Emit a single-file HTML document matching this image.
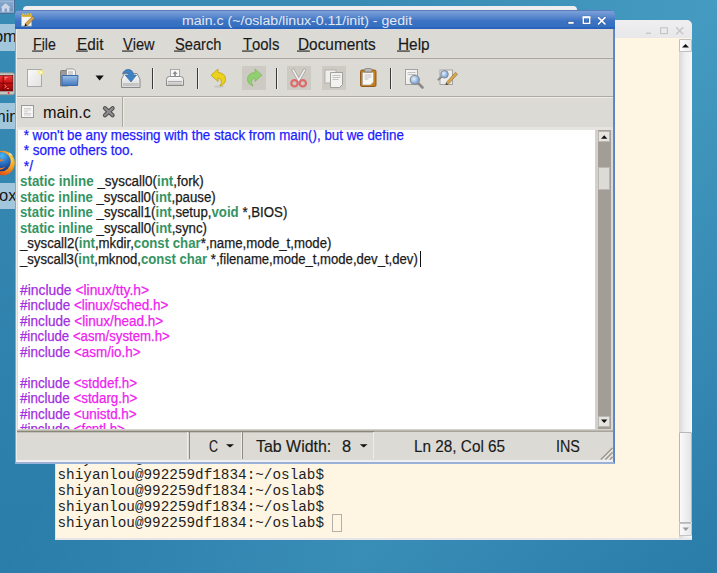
<!DOCTYPE html>
<html><head><meta charset="utf-8">
<style>
*{margin:0;padding:0;box-sizing:border-box}
html,body{width:717px;height:573px;overflow:hidden}
body{position:relative;font-family:"Liberation Sans",sans-serif;background:linear-gradient(122.6deg,rgba(130,230,255,0) 33%,rgba(130,230,255,0.16) 66%,rgba(130,230,255,0) 99%),linear-gradient(180deg,rgb(57,140,181),rgb(42,124,169))}
.a{position:absolute}
svg{position:absolute;display:block}
.dlabel{position:absolute;left:0;width:15px;background:#a2c6dc}
.dtxt{position:absolute;font-size:16.5px;line-height:19px;color:#161616;white-space:nowrap}
#bw{left:23px;top:6px;width:554px;height:40px;background:#eeeef0;border-radius:4px 4px 0 0}
#term{left:55px;top:38px;width:637px;height:502px;background:#fff5e3;border:1px solid #e4e4e8;border-top:none;border-bottom:2px solid #e6e6ea}
#termtb{left:55px;top:20px;width:637px;height:19px;background:linear-gradient(#efeff1,#e7e7ea);border-radius:5px 5px 0 0}
#termsb{left:679px;top:39px;width:13px;height:499px;background:linear-gradient(90deg,#d8d8dc,#eeeef0 45%,#f8f8fa)}
.tline{position:absolute;left:57.5px;font-family:"Liberation Mono",monospace;font-size:14.33px;line-height:16px;color:#1e1e1e;white-space:pre}
#ged{left:15px;top:28px;width:600px;height:436px;background:#dcdad5;border-left:1px solid #8aa2cc;border-right:1px solid #5a82c4;border-bottom:2px solid #9ab2d6}
#gtitle{left:15px;top:10px;width:600px;height:19px;background:linear-gradient(#5a7cbc 0px,#5a7cbc 1px,#7ba1d8 1px,#5f8ccf 6px,#3d72c3 11px,#3470c0 17px,#2a62bc 17px);border-radius:5px 5px 0 0}
.sx{position:absolute;white-space:pre;transform-origin:0 0}
.menu{position:absolute;top:36px;font-size:15.6px;color:#1a1a1a;white-space:pre;transform-origin:0 0;-webkit-text-stroke:0.15px currentColor}
.menu u{text-decoration:none;position:relative}
.menu u:after{content:"";position:absolute;left:-1px;right:-1px;bottom:1px;height:2px;background:linear-gradient(#8a8884,#5a5a5a)}
.sep{position:absolute;top:68px;width:2px;height:21px;background:#3a3a3a;border-right:1px solid #f2f1ee}
.ibox{position:absolute;top:66px;width:24px;height:24px;background:#cdcac4}
#code{left:18px;top:130px;width:577px;height:299px;background:#fff;overflow:hidden}
.cl{position:absolute;left:2px;font-size:13.8px;line-height:15.52px;white-space:pre;color:#1a1a1a;transform-origin:0 0;-webkit-text-stroke:0.25px currentColor}
.k{color:#359462;font-weight:bold;-webkit-text-stroke:0}
.cm{color:#1c1cff}
.pp{color:#a22ee0}
.st{color:#f020f0}
.stat{position:absolute;top:437.5px;font-size:15.6px;color:#1a1a1a;white-space:pre;transform-origin:0 0;-webkit-text-stroke:0.15px currentColor}
</style></head><body>
<!-- desktop icons -->
<svg width="16" height="215" style="left:0;top:0">
 <defs>
  <linearGradient id="hb" x1="0" y1="0" x2="0" y2="1"><stop offset="0" stop-color="#8fb0d4"/><stop offset="1" stop-color="#6e92bc"/></linearGradient>
  <linearGradient id="tr" x1="0" y1="0" x2="0" y2="1"><stop offset="0" stop-color="#f03838"/><stop offset="0.5" stop-color="#c81010"/><stop offset="1" stop-color="#8c0606"/></linearGradient>
  <radialGradient id="ffo" cx="0.75" cy="0.35" r="0.8"><stop offset="0" stop-color="#ffe24a"/><stop offset="0.45" stop-color="#f59a1c"/><stop offset="1" stop-color="#d83a10"/></radialGradient>
  <radialGradient id="ffb" cx="0.55" cy="0.2" r="0.8"><stop offset="0" stop-color="#4cb8f0"/><stop offset="0.5" stop-color="#2a70c4"/><stop offset="1" stop-color="#14307e"/></radialGradient>
 </defs>
 <rect x="-3" y="-3" width="17.5" height="16.5" rx="2" fill="url(#hb)" stroke="#4a6c98" stroke-width="1"/>
 <rect x="-2" y="1.5" width="15.5" height="10.5" fill="none" stroke="#a4bcd8" stroke-width="0.8"/>
 <path d="M0.6 7.6 L5.6 3.2 L10.6 7.6 L9.4 7.6 L9.4 11.8 L1.8 11.8 L1.8 7.6 Z" fill="#cbd6e6"/>
 <rect x="4.6" y="8.6" width="2.4" height="3.2" fill="#7a9cc8"/>
 <rect x="-3" y="72.8" width="17.6" height="22" rx="2" fill="#c4c4c0" stroke="#8c8c88" stroke-width="0.8"/>
 <rect x="-1" y="75.6" width="13.8" height="15.4" fill="url(#tr)" stroke="#5a0404" stroke-width="0.6"/>
 <path d="M3.2 75.8 V91 M-1 83.2 H12.8" stroke="#6a0404" stroke-width="0.8"/>
 <path d="M4.5 77.5 h3 M4.5 79 h1.5 M4.5 85 l2 1.5 l-2 1.5 M7 88.5 h2" stroke="#ffb0b0" stroke-width="0.7" fill="none"/>
 <circle cx="8.6" cy="93" r="0.9" fill="#f02020"/>
 <circle cx="2.5" cy="163" r="12.3" fill="url(#ffo)"/>
 <circle cx="1.2" cy="161.6" r="9.6" fill="url(#ffb)"/>
 <path d="M-1 160 Q3 158 4 161 Q2 160 -1 162 Z M-2 167 Q2 169 6 166.5 Q3 170 -2 170 Z" fill="#f07a20"/>
 <path d="M9 152.5 Q12 153 13 156 Q11 154.5 9.5 155 Z" fill="#ffffff" opacity="0.6"/>
</svg>

<div class="dlabel" style="top:24px;height:27px"></div><div class="dtxt" style="left:-18px;top:27px">Home</div>

<div class="dlabel" style="top:103px;height:26px"></div><div class="dtxt" style="left:-31px;top:107px">Terminal</div>

<div class="dlabel" style="top:182.5px;height:26.5px"></div><div class="dtxt" style="left:-34px;top:186px">Firefox</div>

<div id="bw" class="a"></div>
<!-- terminal -->
<div id="termtb" class="a"></div>
<div id="term" class="a"></div>
<div id="termsb" class="a"></div>
<div class="a" style="left:679px;top:39px;width:13px;height:13px;background:linear-gradient(90deg,#fdfdfd,#ececee);border:1px solid #c0c0c4;border-radius:1px"></div>
<div class="a" style="left:679px;top:432px;width:13px;height:91px;background:linear-gradient(90deg,#fafafa,#e4e4e6);border:1px solid #b8b8bc;border-radius:1px"></div>
<div class="a" style="left:679px;top:523px;width:13px;height:13px;background:linear-gradient(90deg,#fafafa,#e8e8ea);border:1px solid #c4c4c8;border-radius:1px"></div>
<svg width="717" height="573" style="left:0;top:0">
 <path d="M682 47.5 L689 47.5 L685.5 44 Z" fill="#111"/>
 <path d="M682.5 527.5 L689 527.5 L685.8 531 Z" fill="#9a9a9a"/>
 <path d="M646 33.2 h5" stroke="#c4c4c6" stroke-width="1.3"/>
 <rect x="660.6" y="27.8" width="6.8" height="5.8" fill="none" stroke="#c4c4c6" stroke-width="1.1"/>
 <path d="M676.2 27.2 L683.2 34.2 M683.2 27.2 L676.2 34.2" stroke="#c4c4c6" stroke-width="1.3"/>
</svg>
<div class="tline" style="top:451px">shiyanlou@992259df1834:~/oslab$
shiyanlou@992259df1834:~/oslab$
shiyanlou@992259df1834:~/oslab$
shiyanlou@992259df1834:~/oslab$
shiyanlou@992259df1834:~/oslab$</div>
<div class="a" style="left:332px;top:514px;width:10px;height:18px;border:1px solid #b4b0a8"></div>

<!-- gedit -->
<div id="ged" class="a"></div>
<div id="gtitle" class="a"></div>
<svg width="717" height="40" style="left:0;top:0">
 <rect x="568" y="21.5" width="6" height="2.6" fill="#ffffff" stroke="#2a4f90" stroke-width="0.6"/>
 <rect x="583.3" y="17" width="6.4" height="6.4" fill="none" stroke="#1e3f80" stroke-width="2.6" opacity="0.35"/>
 <rect x="583.3" y="17" width="6.4" height="6.4" fill="none" stroke="#ffffff" stroke-width="1.4"/>
 <path d="M582.6 17.4 h7.8" stroke="#ffffff" stroke-width="1.8"/>
 <path d="M598.5 17.6 L605 24 M605 17.6 L598.5 24" stroke="#1e3f80" stroke-width="2.8" stroke-linecap="round" opacity="0.35"/>
 <path d="M598.5 17.6 L605 24 M605 17.6 L598.5 24" stroke="#ffffff" stroke-width="1.7" stroke-linecap="round"/>
</svg>
<div class="sx" style="left:182px;top:14px;font-size:12.5px;color:#e4e8f0;transform:scaleX(1.1296)">main.c (~/oslab/linux-0.11/init) - gedit</div>

<div class="menu" style="left:32.5px;transform:scaleX(0.908)"><u>F</u>ile</div>
<div class="menu" style="left:76.6px;transform:scaleX(0.9815)"><u>E</u>dit</div>
<div class="menu" style="left:123.4px;transform:scaleX(0.9353)"><u>V</u>iew</div>
<div class="menu" style="left:175.3px;transform:scaleX(0.9388)"><u>S</u>earch</div>
<div class="menu" style="left:242.5px;transform:scaleX(0.9528)"><u>T</u>ools</div>
<div class="menu" style="left:298.3px;transform:scaleX(0.9861)"><u>D</u>ocuments</div>
<div class="menu" style="left:397.7px;transform:scaleX(0.9875)"><u>H</u>elp</div>
<div class="a" style="left:16px;top:58px;width:597px;height:1px;background:#aaa69e"></div>
<div class="a" style="left:16px;top:96px;width:598px;height:1px;background:#aeaaa3"></div>
<div class="a" style="left:16px;top:97px;width:598px;height:1px;background:#eeece8"></div>

<div class="sep" style="left:152px"></div>
<div class="sep" style="left:197px"></div>
<div class="sep" style="left:276px"></div>
<div class="sep" style="left:390px"></div>
<div class="ibox" style="left:242px"></div>
<div class="ibox" style="left:287px"></div>
<div class="ibox" style="left:322px"></div>

<!-- toolbar icons -->
<svg width="717" height="130" style="left:0;top:0" viewBox="0 0 717 130">
 <defs>
  <linearGradient id="gpage" x1="0" y1="0" x2="1" y2="1"><stop offset="0" stop-color="#fafafa"/><stop offset="1" stop-color="#e2e2e2"/></linearGradient>
  <linearGradient id="gblue" x1="0" y1="0" x2="0" y2="1"><stop offset="0" stop-color="#9cc0e8"/><stop offset="1" stop-color="#4479bd"/></linearGradient>
  <linearGradient id="gtray" x1="0" y1="0" x2="0" y2="1"><stop offset="0" stop-color="#fbfbfb"/><stop offset="1" stop-color="#d8d8d8"/></linearGradient>
  <radialGradient id="gstar"><stop offset="0" stop-color="#ffffff"/><stop offset="0.45" stop-color="#fff27a"/><stop offset="1" stop-color="#f2e040" stop-opacity="0"/></radialGradient>
  <radialGradient id="glens" cx="0.4" cy="0.4"><stop offset="0" stop-color="#e8f2fc"/><stop offset="1" stop-color="#7ea8dc"/></radialGradient>
 </defs>
 <!-- gedit title icon -->
 <rect x="21.5" y="15.5" width="10" height="10.5" fill="#f6f5ef" stroke="#b8b2a2" stroke-width="0.9"/>
 <path d="M22 16 h9" stroke="#d8a818" stroke-width="1.6"/>
 <circle cx="23" cy="14.3" r="1" fill="#e8c030"/><circle cx="25.5" cy="14.3" r="1" fill="#e8c030"/><circle cx="28" cy="14.3" r="1" fill="#e8c030"/><circle cx="30.5" cy="14.3" r="1" fill="#e8c030"/>
 <path d="M25.2 23.6 L32.6 16.2 L34.6 18.2 L27.2 25.6 Z" fill="#d4a450" stroke="#7a5a20" stroke-width="0.5"/>
 <path d="M25.2 23.6 L24.4 26.4 L27.2 25.6 Z" fill="#1a1a1a"/>
 <!-- new -->
 <rect x="27.5" y="69.5" width="14" height="17" fill="url(#gpage)" stroke="#a4a4a4" stroke-width="0.9"/>
 <circle cx="40.7" cy="72.4" r="3.2" fill="url(#gstar)"/>
 <!-- open -->
 <path d="M60.5 86 L60.5 71.5 Q60.5 70.5 61.5 70.5 L66 70.5 L67 72 L68 72 L68 86 Z" fill="#9a9a9a" stroke="#6e6e6e" stroke-width="0.8"/>
 <path d="M66.5 80 L66.5 69 L73.5 69 L75.5 71 L75.5 80 Z" fill="#f6f6f6" stroke="#8a8a8a" stroke-width="0.8"/>
 <path d="M68 72 h5 M68 74 h5" stroke="#9a9a9a" stroke-width="0.8"/>
 <path d="M62 85.5 L62 75.5 L78 75.5 L77.5 85.5 Z" fill="url(#gblue)" stroke="#3a68a8" stroke-width="1"/>
 <!-- dropdown -->
 <path d="M95.5 75.5 L103.8 75.5 L99.6 80.5 Z" fill="#111"/>
 <!-- save -->
 <path d="M121.5 87.5 L121.5 79 L124.5 73.5 L137 73.5 L140 79 L140 87.5 Z" fill="url(#gtray)" stroke="#8a8a8a" stroke-width="1"/>
 <rect x="123" y="83" width="15.5" height="3" fill="#c4c4c4"/>
 <path d="M122.5 74 Q124 69 129 69.5 Q133 70 133.5 75 L136.5 75 L131 82 L125 75 L128.5 75 Q128.5 72.5 126 72.8 Q124 73 122.5 74 Z" fill="#3f82c4" stroke="#2a5f98" stroke-width="0.6"/>
 <!-- print -->
 <rect x="170.5" y="69.5" width="9" height="9" fill="#f8f8f8" stroke="#9a9a9a" stroke-width="0.8"/>
 <path d="M175 71 L172.5 74 L177.5 74 Z M174.2 74 h1.6 v2 h-1.6 Z" fill="#8a8a8a"/>
 <path d="M166.5 85.5 L166.5 79.5 Q166.5 76.5 169.5 76.5 L180.5 76.5 Q183.5 76.5 183.5 79.5 L183.5 85.5 Z" fill="url(#gtray)" stroke="#8a8a8a" stroke-width="1"/>
 <rect x="168" y="81" width="14" height="1.2" fill="#a8a8a8"/>
 <rect x="168" y="83.5" width="14" height="1.2" fill="#b8b8b8"/>
 <!-- undo -->
 <path d="M211 75.2 L218 69 L218 72.5 Q225.5 73 225.5 79.5 Q225.5 84 220 86 Q222.5 82.5 221 80 Q220 78 218 78 L218 81.5 Z" fill="#ecd21c" stroke="#c0a200" stroke-width="0.8" stroke-linejoin="round"/>
 <ellipse cx="219" cy="86.5" rx="5" ry="1.2" fill="#000" opacity="0.08"/>
 <!-- redo (insensitive) -->
 <path d="M262 75.2 L255 69 L255 72.5 Q247.5 73 247.5 79.5 Q247.5 84 253 86 Q250.5 82.5 252 80 Q253 78 255 78 L255 81.5 Z" fill="#92cf70" stroke="#78b858" stroke-width="0.7" stroke-linejoin="round"/>
 <!-- cut -->
 <path d="M293 70 L299 80.5 M304.5 70 L298.5 80.5" stroke="#a09e9a" stroke-width="3" stroke-linecap="round"/>
 <path d="M293 70 L299 80.5 M304.5 70 L298.5 80.5" stroke="#f0f0f0" stroke-width="1.6" stroke-linecap="round"/>
 <circle cx="294.5" cy="83.3" r="3.2" fill="none" stroke="#dc6a6a" stroke-width="2.2"/>
 <circle cx="302.8" cy="83.3" r="3.2" fill="none" stroke="#dc6a6a" stroke-width="2.2"/>
 <!-- copy -->
 <rect x="325" y="70" width="11" height="13" fill="#eeeeec" stroke="#aaa8a4" stroke-width="0.8"/>
 <path d="M330.5 72.5 L342.5 72.5 L342.5 84.5 L339.5 87.5 L330.5 87.5 Z" fill="#f2f2f0" stroke="#9a9894" stroke-width="0.9"/>
 <path d="M332.5 75.5 h8 M332.5 77.5 h8 M332.5 79.5 h6" stroke="#b8b6b2" stroke-width="0.8"/>
 <!-- paste -->
 <rect x="360.5" y="70" width="15.5" height="16.5" rx="1.5" fill="#c47e1c" stroke="#8a5410" stroke-width="0.9"/>
 <path d="M362.5 72.5 L373.5 72.5 L373.5 82 L370.5 85 L362.5 85 Z" fill="#f8f8f6" stroke="#a0a0a0" stroke-width="0.6"/>
 <rect x="364.5" y="68.5" width="7.5" height="3.5" rx="1.5" fill="#b8b8b8" stroke="#7a7a7a" stroke-width="0.7"/>
 <path d="M364.5 75 h7 M364.5 77 h7 M364.5 79 h4" stroke="#b0b0b0" stroke-width="0.8"/>
 <!-- find -->
 <rect x="405.5" y="69.5" width="12" height="15" fill="url(#gpage)" stroke="#9c9c9c" stroke-width="0.9"/>
 <path d="M407.5 72.5 h8 M407.5 74.5 h8" stroke="#b4b4b4" stroke-width="0.8"/>
 <path d="M418.5 83.5 L422.5 87.5" stroke="#8a8a8a" stroke-width="2.6" stroke-linecap="round"/>
 <circle cx="414.8" cy="79.8" r="4.6" fill="url(#glens)" stroke="#8a8a8a" stroke-width="1.1"/>
 <!-- replace -->
 <rect x="440" y="70" width="12.5" height="14.5" fill="url(#gpage)" stroke="#9c9c9c" stroke-width="0.9"/>
 <path d="M441.5 77 L438.5 79.5" stroke="#8a8a8a" stroke-width="2.2" stroke-linecap="round"/>
 <circle cx="444.5" cy="74.3" r="3.8" fill="url(#glens)" stroke="#8a8a8a" stroke-width="1"/>
 <path d="M446 82.8 L455.5 72.3 L457.5 74.2 L448 84.5 Z" fill="#d8a850" stroke="#8a6a2a" stroke-width="0.6"/>
 <path d="M446 82.8 L445.5 85 L448 84.5 Z" fill="#333"/>
 <!-- tab doc icon -->
 <rect x="21.5" y="105.5" width="12" height="12" fill="#f6f6f6" stroke="#9a9a9a" stroke-width="1"/>
 <path d="M24 108.5 h7 M24 110 h7 M24 111.8 h4 M24 113.5 h7 M24 115 h7" stroke="#c8c8c8" stroke-width="0.8"/>
 <!-- tab close -->
 <path d="M105 108.2 L112.6 115.3 M112.6 108.2 L105 115.3" stroke="#4a4a4a" stroke-width="4.2" stroke-linecap="round"/>
 <path d="M105 108.2 L112.6 115.3 M112.6 108.2 L105 115.3" stroke="#8e8e8e" stroke-width="2.2" stroke-linecap="round"/>
</svg>

<!-- tab -->
<div class="a" style="left:122px;top:97px;width:2px;height:30px;background:#aaa6a0;border-right:1px solid #ecebe7"></div>
<div class="a" style="left:16px;top:127px;width:598px;height:3px;background:#e6e4e0"></div>
<div class="sx" style="left:42.5px;top:103px;font-size:16.4px;color:#111;transform:scaleX(0.99)">main.c</div>

<!-- code -->
<div id="code" class="a">
<div class="cl" style="top:-2.50px;transform:scaleX(0.9673)"><span class="cm"> * won't be any messing with the stack from main(), but we define</span></div>
<div class="cl" style="top:13.02px;transform:scaleX(0.9784)"><span class="cm"> * some others too.</span></div>
<div class="cl" style="top:28.54px;transform:scaleX(1.0)"><span class="cm"> */</span></div>
<div class="cl" style="top:44.06px;transform:scaleX(0.9704)"><span class="k">static</span> <span class="k">inline</span> _syscall0(<span class="k">int</span>,fork)</div>
<div class="cl" style="top:59.58px;transform:scaleX(0.9593)"><span class="k">static</span> <span class="k">inline</span> _syscall0(<span class="k">int</span>,pause)</div>
<div class="cl" style="top:75.10px;transform:scaleX(0.9604)"><span class="k">static</span> <span class="k">inline</span> _syscall1(<span class="k">int</span>,setup,<span class="k">void</span> *,BIOS)</div>
<div class="cl" style="top:90.62px;transform:scaleX(0.9603)"><span class="k">static</span> <span class="k">inline</span> _syscall0(<span class="k">int</span>,sync)</div>
<div class="cl" style="top:106.14px;transform:scaleX(0.9577)">_syscall2(<span class="k">int</span>,mkdir,<span class="k">const</span> <span class="k">char</span>*,name,mode_t,mode)</div>
<div class="cl" style="top:121.66px;transform:scaleX(0.9499)">_syscall3(<span class="k">int</span>,mknod,<span class="k">const</span> <span class="k">char</span> *,filename,mode_t,mode,dev_t,dev)</div>
<div class="cl" style="top:152.70px;transform:scaleX(1.0031)"><span class="pp">#include</span> <span class="st">&lt;linux/tty.h&gt;</span></div>
<div class="cl" style="top:168.22px;transform:scaleX(0.977)"><span class="pp">#include</span> <span class="st">&lt;linux/sched.h&gt;</span></div>
<div class="cl" style="top:183.74px;transform:scaleX(0.9829)"><span class="pp">#include</span> <span class="st">&lt;linux/head.h&gt;</span></div>
<div class="cl" style="top:199.26px;transform:scaleX(0.9571)"><span class="pp">#include</span> <span class="st">&lt;asm/system.h&gt;</span></div>
<div class="cl" style="top:214.78px;transform:scaleX(0.9756)"><span class="pp">#include</span> <span class="st">&lt;asm/io.h&gt;</span></div>
<div class="cl" style="top:245.82px;transform:scaleX(0.9725)"><span class="pp">#include</span> <span class="st">&lt;stddef.h&gt;</span></div>
<div class="cl" style="top:261.34px;transform:scaleX(0.9669)"><span class="pp">#include</span> <span class="st">&lt;stdarg.h&gt;</span></div>
<div class="cl" style="top:276.86px;transform:scaleX(0.975)"><span class="pp">#include</span> <span class="st">&lt;unistd.h&gt;</span></div>
<div class="cl" style="top:292.38px;transform:scaleX(0.97)"><span class="pp">#include</span> <span class="st">&lt;fcntl.h&gt;</span></div>
<div class="a" style="left:402px;top:121px;width:1px;height:16px;background:#111"></div>
</div>

<!-- scrollbar -->
<div class="a" style="left:595px;top:130px;width:3px;height:299px;background:#d4d1cc"></div>
<div class="a" style="left:598px;top:130px;width:13px;height:299px;background:#a29e97"></div>
<div class="a" style="left:598px;top:131px;width:12px;height:11px;background:#e6e4e0;border:1px solid #bab6b0"></div>
<div class="a" style="left:598px;top:167px;width:12px;height:23px;background:#dddbd6;border:1px solid #bab6b0"></div>
<div class="a" style="left:598px;top:416px;width:12px;height:11px;background:#e6e4e0;border:1px solid #bab6b0"></div>

<!-- status -->
<svg width="717" height="573" style="left:0;top:0">
 <path d="M601 138.8 L607.4 138.8 L604.2 135.3 Z" fill="#111"/>
 <path d="M601 419.6 L607.4 419.6 L604.2 423.1 Z" fill="#111"/>
 <path d="M602.2 459.8 L612.8 449.2 M606.7 459.8 L612.8 453.7 M611.2 459.8 L612.8 458.2" stroke="#f6f5f2" stroke-width="1.2"/>
 <path d="M601 459.5 L612.5 448 M605.5 459.5 L612.5 452.5 M610 459.5 L612.5 457" stroke="#9e988e" stroke-width="1.6"/>
</svg>
<div class="a" style="left:16px;top:429px;width:597px;height:1px;background:#d4d2cc"></div>
<div class="a" style="left:16px;top:430px;width:597px;height:1px;background:#bcb8b0"></div>
<div class="a" style="left:16px;top:431px;width:358px;height:1px;background:#8a8678"></div>
<div class="a" style="left:374px;top:431px;width:239px;height:1px;background:#a8a49c"></div>
<div class="a" style="left:16px;top:432px;width:358px;height:1px;background:#c4c0b8"></div>
<div class="a" style="left:16px;top:460px;width:598px;height:2px;background:#f0f0f4"></div>
<div class="a" style="left:613px;top:29px;width:1px;height:433px;background:#8c8478"></div>
<div class="a" style="left:16px;top:29px;width:1px;height:433px;background:#ecebe6"></div>
<div class="a" style="left:187px;top:432px;width:1px;height:27px;background:#eeede9"></div>
<div class="a" style="left:188.5px;top:432px;width:1px;height:27px;background:#8e8a82"></div>
<div class="a" style="left:240.5px;top:432px;width:1px;height:27px;background:#eeede9"></div>
<div class="a" style="left:242px;top:432px;width:1px;height:27px;background:#8e8a82"></div>
<div class="a" style="left:373px;top:432px;width:1px;height:27px;background:#eeede9"></div>
<div class="stat" style="left:208.5px;transform:scaleX(0.8)">C</div>
<div class="stat" style="left:255.9px;transform:scaleX(1.0219)">Tab Width:</div>
<div class="stat" style="left:342px;transform:scaleX(1.05)">8</div>
<div class="stat" style="left:414.2px;transform:scaleX(0.9824)">Ln 28, Col 65</div>
<div class="stat" style="left:556px;transform:scaleX(0.92)">INS</div>
<svg width="717" height="20" style="left:0;top:440px"><path d="M226 4.2 L234 4.2 L230 7.6 Z M359.8 4.2 L367.6 4.2 L363.7 7.6 Z" fill="#111"/></svg>
</body></html>
